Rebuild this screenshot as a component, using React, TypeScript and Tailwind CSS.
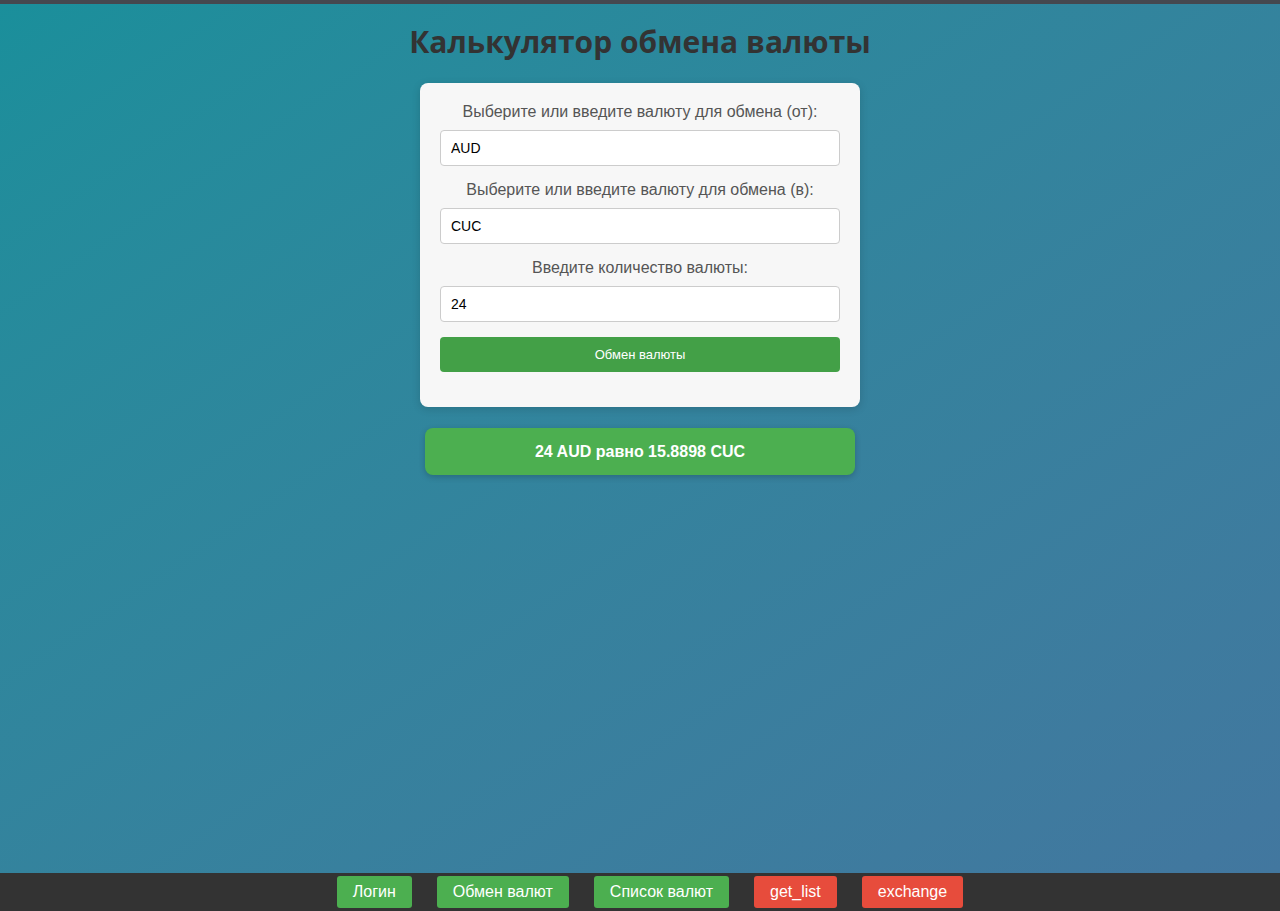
import React from "react";

const inputCls =
  "h-[36px] w-full bg-white border border-[#cccccc] rounded-[4px] px-[10px] text-[14px] text-black outline-none mb-[15px] font-['Liberation_Sans',Arial,sans-serif]";
const labelCls = "text-center text-[16px] leading-[18px] text-[#555555] mb-[9px]";
const navBtn =
  "h-[32px] rounded-[3px] text-white text-[16px] font-['Liberation_Sans',Arial,sans-serif]";

export default function App() {
  return (
    <div className="flex flex-col h-[911px] w-full overflow-hidden font-['Liberation_Sans',Arial,sans-serif]">
      <div className="h-[4px] bg-[#45484f] shrink-0" />
      <main className="flex-1 flex flex-col items-center bg-gradient-to-br from-[#1a8f9b] to-[#42779f]">
        <h1 className="mt-[18px] text-[30px] leading-[40px] font-bold text-[#333333] font-['Open_Sans','Noto_Sans',sans-serif]">
          Калькулятор обмена валюты
        </h1>
        <div className="mt-[21px] w-[440px] bg-[#f7f7f7] rounded-[8px] px-[20px] pt-[20px] pb-[35px] flex flex-col shadow-[0_2px_8px_rgba(0,0,0,0.15)]">
          <label className={labelCls}>Выберите или введите валюту для обмена (от):</label>
          <input readOnly value="AUD" className={inputCls} />
          <label className={labelCls}>Выберите или введите валюту для обмена (в):</label>
          <input readOnly value="CUC" className={inputCls} />
          <label className={labelCls}>Введите количество валюты:</label>
          <input readOnly value="24" className={inputCls} />
          <button className="h-[35px] w-full bg-[#43a047] text-white text-[13px] rounded-[4px] font-['Liberation_Sans',Arial,sans-serif]">
            Обмен валюты
          </button>
        </div>
        <div className="mt-[21px] w-[430px] h-[47px] bg-[#4caf50] rounded-[8px] flex items-center justify-center text-white font-bold text-[16px] shadow-[0_2px_6px_rgba(0,0,0,0.2)]">
          24 AUD равно 15.8898 CUC
        </div>
      </main>
      <footer className="h-[38px] shrink-0 bg-[#333333] flex items-center justify-center gap-[25px] pl-[20px]">
        <button className={`${navBtn} px-[16px] bg-[#4caf50]`}>Логин</button>
        <button className={`${navBtn} px-[16px] bg-[#4caf50]`}>Обмен валют</button>
        <button className={`${navBtn} px-[16px] bg-[#4caf50]`}>Список валют</button>
        <button className={`${navBtn} px-[16px] bg-[#e74c3c]`}>get_list</button>
        <button className={`${navBtn} px-[16px] bg-[#e74c3c]`}>exchange</button>
      </footer>
    </div>
  );
}
